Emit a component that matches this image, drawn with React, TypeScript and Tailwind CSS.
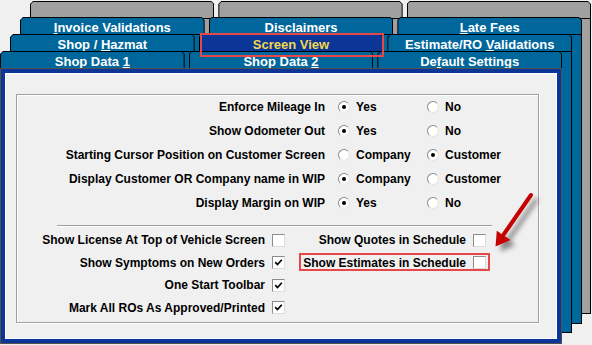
import type { ReactNode } from "react";

const FONT = "font-['Liberation_Sans',Arial,sans-serif]";

type TabDef = { label?: ReactNode; active?: boolean };

const ROW1: TabDef[] = [{}, {}, {}];
const ROW2: TabDef[] = [
  { label: <><u>I</u>nvoice Validations</> },
  { label: "Disclaimers" },
  { label: <><u>L</u>ate Fees</> },
];
const ROW3: TabDef[] = [
  { label: <>Shop / <u>H</u>azmat</> },
  { label: "Screen View", active: true },
  { label: <>Estimate/RO <u>V</u>alidations</> },
];
const ROW4: TabDef[] = [
  { label: <>Shop Data <u>1</u></> },
  { label: <>Shop Data <u>2</u></> },
  { label: <>De<u>f</u>ault Settings</> },
];

const RADIO_ROWS = [
  { label: "Enforce Mileage In", options: ["Yes", "No"], selected: 0 },
  { label: "Show Odometer Out", options: ["Yes", "No"], selected: 0 },
  { label: "Starting Cursor Position on Customer Screen", options: ["Company", "Customer"], selected: 1 },
  { label: "Display Customer OR Company name in WIP", options: ["Company", "Customer"], selected: 0 },
  { label: "Display Margin on WIP", options: ["Yes", "No"], selected: 0 },
];

const CHECK_ROWS: { left: [string, boolean]; right?: [string, boolean, boolean?] }[] = [
  { left: ["Show License At Top of Vehicle Screen", false], right: ["Show Quotes in Schedule", false] },
  { left: ["Show Symptoms on New Orders", true], right: ["Show Estimates in Schedule", false, true] },
  { left: ["One Start Toolbar", true] },
  { left: ["Mark All ROs As Approved/Printed", true] },
];

function Tab({ tab, fill }: { tab: TabDef; fill: string }) {
  const bg = tab.active ? "bg-[#0b3596] text-[#f2d94e]" : `${fill} text-white`;
  return (
    <div className="flex-1 bg-black px-px pt-px [clip-path:polygon(3px_0,calc(100%_-_3px)_0,100%_3px,100%_100%,0_100%,0_3px)]">
      <div
        className={`h-full ${bg} whitespace-nowrap pt-[2px] text-center text-[13px] font-bold leading-[15px] [clip-path:polygon(2px_0,calc(100%_-_2px)_0,100%_2px,100%_100%,0_100%,0_2px)]`}
      >
        {tab.label}
      </div>
    </div>
  );
}

function Sheet({ pos, tabs, fill, children }: { pos: string; tabs: TabDef[]; fill: string; children?: ReactNode }) {
  return (
    <div className={`absolute flex flex-col ${pos}`}>
      <div className="flex h-[17px] shrink-0 gap-1">
        {tabs.map((t, i) => (
          <Tab key={i} tab={t} fill={fill} />
        ))}
      </div>
      {children ?? <div className={`flex-1 border border-black ${fill}`} />}
    </div>
  );
}

function Radio({ checked }: { checked: boolean }) {
  return (
    <span className="flex h-3 w-3 shrink-0 items-center justify-center rounded-full border border-[#8c8c8c] border-b-[#e4e4e4] border-r-[#e4e4e4] bg-white">
      {checked && <span className="h-1 w-1 rounded-full bg-black" />}
    </span>
  );
}

function CheckBox({ checked }: { checked: boolean }) {
  return (
    <span className="flex h-[13px] w-[13px] shrink-0 items-center justify-center border border-[#8c8c8c] border-b-[#dcdcdc] border-r-[#dcdcdc] bg-white">
      {checked && (
        <svg width="9" height="9" viewBox="0 0 9 9">
          <path d="M1.2 4.2 L3.5 6.6 L7.8 1.8" fill="none" stroke="#000" strokeWidth="1.7" />
        </svg>
      )}
    </span>
  );
}

function CheckItem({ label, checked, marked }: { label: string; checked: boolean; marked?: boolean }) {
  return (
    <div className="flex items-center justify-end">
      <span className="relative flex items-center gap-[7px] leading-[14px]">
        <span>{label}</span>
        <CheckBox checked={checked} />
        {marked && <span className="absolute -inset-x-1 -top-[3px] -bottom-px border-2 border-[#e8474a]" />}
      </span>
    </div>
  );
}

function GroupBox() {
  return (
    <div className="h-[229px] w-[523px] border border-[#a0a0a0] text-[12px] font-bold text-black shadow-[1px_1px_0_#fff,inset_1px_1px_0_#fff]">
      <div className="flex flex-col">
        {RADIO_ROWS.map(row => (
          <div key={row.label} className="grid h-6 grid-cols-[321px_89px_1fr] items-center">
            <span className="whitespace-nowrap pr-[13px] text-right">{row.label}</span>
            {row.options.map((opt, i) => (
              <span key={opt} className="flex items-center gap-[6px]">
                <Radio checked={row.selected === i} />
                {opt}
              </span>
            ))}
          </div>
        ))}
      </div>

      <div className="ml-[40px] mt-[10px] h-[2px] w-[435px] border-b border-t border-b-white border-t-[#a0a0a0]" />

      <div className="mt-[2px] grid auto-rows-[22.5px] grid-cols-[268px_201px] items-center">
        {CHECK_ROWS.map(row => (
          <div key={row.left[0]} className="contents">
            <CheckItem label={row.left[0]} checked={row.left[1]} />
            {row.right ? <CheckItem label={row.right[0]} checked={row.right[1]} marked={row.right[2]} /> : <div />}
          </div>
        ))}
      </div>
    </div>
  );
}

export default function App() {
  return (
    <div className={`relative h-[345px] w-[592px] overflow-hidden bg-[#f0f0f0] ${FONT}`}>
      <Sheet pos="left-[30px] top-px h-[313px] w-[561px]" tabs={ROW1} fill="bg-[#a0a0a0]" />
      <Sheet pos="left-[20px] top-[17px] h-[307px] w-[562px]" tabs={ROW2} fill="bg-[#00679c]" />
      <Sheet pos="left-[10px] top-[34px] h-[299px] w-[562px]" tabs={ROW3} fill="bg-[#00679c]" />
      <Sheet pos="left-0 top-[51px] h-[293px] w-[562px]" tabs={ROW4} fill="bg-[#00679c]">
        <div className="flex-1 border border-[#505050] bg-[#0b3596] p-1">
          <div className="h-full border border-white bg-[#f0f0f0] pl-[10px] pt-[20px]">
            <GroupBox />
          </div>
        </div>
      </Sheet>

      {/* annotation: highlighted tab */}
      <div className="absolute left-[200px] top-[33px] h-[24px] w-[184px] border-2 border-[#e8474a]" />

      {/* annotation: arrow */}
      <svg className="pointer-events-none absolute left-0 top-0" width="592" height="345">
        <defs>
          <filter id="arrowShadow" x="-50%" y="-50%" width="200%" height="200%">
            <feDropShadow dx="5" dy="5" stdDeviation="2.5" floodColor="#000" floodOpacity="0.45" />
          </filter>
        </defs>
        <g filter="url(#arrowShadow)">
          <line x1="531" y1="195" x2="504" y2="234" stroke="#c40000" strokeWidth="4" strokeLinecap="round" />
          <polygon points="495.5,246.5 496.8,230.7 510.5,239.9" fill="#c40000" />
        </g>
      </svg>
    </div>
  );
}
